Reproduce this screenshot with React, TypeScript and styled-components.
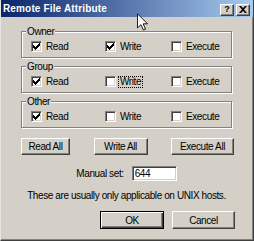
import React from "react";
import styled, { createGlobalStyle } from "styled-components";

const Global = createGlobalStyle`
  html, body { margin: 0; padding: 0; background: #D4D0C8; }
  body { font-family: "Liberation Sans", Arial, sans-serif; }
`;

const Window = styled.div`
  position: relative;
  width: 254px;
  height: 241px;
  box-sizing: border-box;
  background: #d4d0c8;
  border-left: 1px solid #e6e4de;
  border-right: 1px solid #404040;
  border-bottom: 1px solid #404040;
  box-shadow: inset -1px -1px 0 #808080;
  display: flex;
  flex-direction: column;
  font-family: "Liberation Sans", Arial, sans-serif;
  font-size: 10px;
  letter-spacing: -0.4px;
  color: #000;
  overflow: hidden;
`;

const TitleBar = styled.div`
  height: 17px;
  flex: none;
  display: flex;
  align-items: center;
  padding: 0 3px 0 2px;
  background: linear-gradient(to right, #0a246a, #a6caf0);
  color: #fff;
`;

const TitleText = styled.div`
  flex: 1;
  font-weight: bold;
  font-size: 10px;
  letter-spacing: 0.15px;
  white-space: nowrap;
`;

const TitleButton = styled.div<{ $gap?: number }>`
  width: 14px;
  height: 12px;
  margin-top: 2px;
  margin-left: ${(p) => p.$gap ?? 0}px;
  box-sizing: border-box;
  background: #d4d0c8;
  border: 1px solid;
  border-color: #fff #404040 #404040 #fff;
  box-shadow: inset -1px -1px 0 #808080;
  display: flex;
  align-items: center;
  justify-content: center;
  color: #000;
  font-weight: bold;
  font-size: 9px;
  letter-spacing: 0;
  line-height: 9px;
`;

const Content = styled.div`
  flex: 1;
  display: flex;
  flex-direction: column;
  padding: 0 21px 0 20px;
`;

const Group = styled.div<{ $top: number }>`
  margin-top: ${(p) => p.$top}px;
  height: 27px;
  box-sizing: border-box;
  border: 1px solid #808080;
  box-shadow: inset 1px 1px 0 #fff, 1px 1px 0 #fff;
  display: flex;
  flex-direction: column;
`;

const Legend = styled.div`
  align-self: flex-start;
  margin: -6px 0 0 4px;
  padding: 0 1px;
  height: 11px;
  line-height: 11px;
  background: #d4d0c8;
`;

const Row = styled.div`
  display: grid;
  grid-template-columns: 74px 66px auto;
  margin: 4px 0 0 9px;
`;

const Option = styled.div`
  display: flex;
  align-items: center;
  gap: 2px;
  height: 11px;
`;

const Box = styled.span`
  width: 11px;
  height: 11px;
  flex: none;
  box-sizing: border-box;
  background: #fff;
  border: 1px solid;
  border-color: #808080 #fff #fff #808080;
  box-shadow: inset 1px 1px 0 #404040, inset -1px -1px 0 #d4d0c8;
  display: flex;
  align-items: center;
  justify-content: center;
`;

const OptionLabel = styled.span<{ $focus?: boolean }>`
  padding: 0 1px;
  line-height: 10px;
  border: 1px dotted ${(p) => (p.$focus ? "#000" : "transparent")};
  white-space: nowrap;
`;

const ButtonRow = styled.div`
  display: flex;
  justify-content: space-between;
  margin: 10px -2px 0 0;
`;

const PushButton = styled.div<{ $w: number; $h?: number; $default?: boolean }>`
  width: ${(p) => p.$w}px;
  height: ${(p) => p.$h ?? 17}px;
  box-sizing: border-box;
  background: #d4d0c8;
  display: flex;
  align-items: center;
  justify-content: center;
  white-space: nowrap;
  ${(p) =>
    p.$default
      ? `border: 1px solid #000;
         box-shadow: inset 1px 1px 0 #fff, inset -1px -1px 0 #404040, inset -2px -2px 0 #808080;`
      : `border: 1px solid;
         border-color: #fff #404040 #404040 #fff;
         box-shadow: inset -1px -1px 0 #808080;`}
`;

const ManualRow = styled.div`
  display: flex;
  justify-content: center;
  align-items: center;
  gap: 8px;
  margin-top: 11px;
`;

const Field = styled.input`
  width: 45px;
  height: 15px;
  box-sizing: border-box;
  border: 1px solid;
  border-color: #808080 #fff #fff #808080;
  box-shadow: inset 1px 1px 0 #404040, inset -1px -1px 0 #d4d0c8;
  background: #fff;
  padding: 0 2px;
  margin: 0;
  font: inherit;
  letter-spacing: inherit;
  color: #000;
  outline: none;
`;

const Note = styled.div`
  margin-top: 9px;
  line-height: 12px;
  text-align: center;
  white-space: nowrap;
`;

const Footer = styled.div`
  display: flex;
  justify-content: flex-end;
  gap: 8px;
  margin: 9px -3px 0 0;
`;

const Cursor = styled.svg`
  position: absolute;
  left: 136px;
  top: 13px;
`;

const Check = () => (
  <svg width="7" height="7" viewBox="0 0 7 7">
    <path
      d="M0 2h1v1h1v1h1v-1h1v-1h1v-1h1v-1h1v3h-1v1h-1v1h-1v1h-1v1h-1v-1h-1v-1h-1z"
      fill="#000"
    />
  </svg>
);

type Opt = { label: string; checked: boolean; focus?: boolean };

const groups: { name: string; top: number; opts: Opt[] }[] = [
  {
    name: "Owner",
    top: 14,
    opts: [
      { label: "Read", checked: true },
      { label: "Write", checked: true },
      { label: "Execute", checked: false },
    ],
  },
  {
    name: "Group",
    top: 8,
    opts: [
      { label: "Read", checked: true },
      { label: "Write", checked: false, focus: true },
      { label: "Execute", checked: false },
    ],
  },
  {
    name: "Other",
    top: 8,
    opts: [
      { label: "Read", checked: true },
      { label: "Write", checked: false },
      { label: "Execute", checked: false },
    ],
  },
];

export default function App() {
  return (
    <>
      <Global />
      <Window>
        <TitleBar>
          <TitleText>Remote File Attribute</TitleText>
          <TitleButton>?</TitleButton>
          <TitleButton $gap={2}>
            <svg width="8" height="7" viewBox="0 0 8 7">
              <path d="M0 0h2l2 2 2-2h2l-3 3.5 3 3.5h-2l-2-2-2 2h-2l3-3.5z" fill="#000" />
            </svg>
          </TitleButton>
        </TitleBar>
        <Content>
          {groups.map((g) => (
            <Group key={g.name} $top={g.top}>
              <Legend>{g.name}</Legend>
              <Row>
                {g.opts.map((o) => (
                  <Option key={o.label}>
                    <Box>{o.checked && <Check />}</Box>
                    <OptionLabel $focus={o.focus}>{o.label}</OptionLabel>
                  </Option>
                ))}
              </Row>
            </Group>
          ))}
          <ButtonRow>
            <PushButton $w={49}>Read All</PushButton>
            <PushButton $w={54}>Write All</PushButton>
            <PushButton $w={63}>Execute All</PushButton>
          </ButtonRow>
          <ManualRow>
            <span>Manual set:</span>
            <Field defaultValue="644" readOnly />
          </ManualRow>
          <Note>These are usually only applicable on UNIX hosts.</Note>
          <Footer>
            <PushButton $w={64} $h={18} $default>
              OK
            </PushButton>
            <PushButton $w={63} $h={18}>
              Cancel
            </PushButton>
          </Footer>
        </Content>
        <Cursor width="11" height="18" viewBox="0 0 12 19">
          <path
            d="M0.5 0.5 L0.5 16 L4.3 12.4 L7 18.3 L9.3 17.3 L6.7 11.5 L11.5 11.5 Z"
            fill="#fff"
            stroke="#000"
            strokeWidth="1"
            strokeLinejoin="miter"
          />
        </Cursor>
      </Window>
    </>
  );
}
